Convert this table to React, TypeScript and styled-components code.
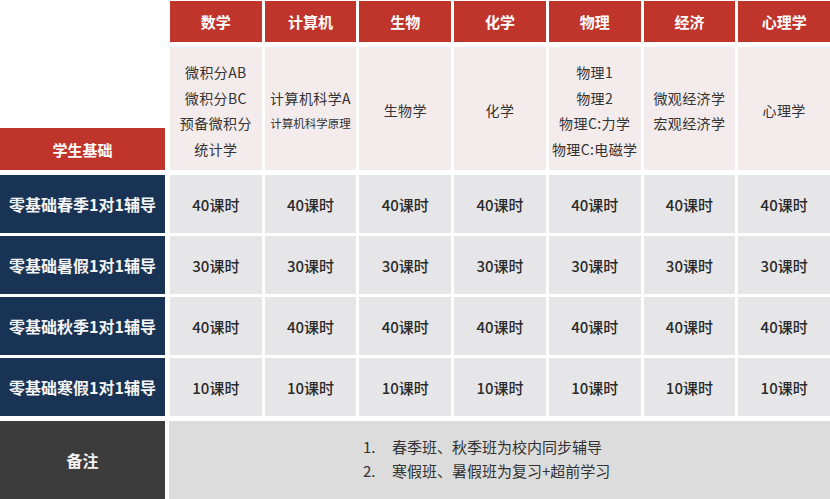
import styled, {createGlobalStyle} from 'styled-components'

const GlobalStyle = createGlobalStyle`
  html, body {
    margin: 0;
    padding: 0;
    background: #ffffff;
  }
  body {
    font-family: "Noto Sans CJK SC", "Noto Sans", sans-serif;
    color: #333333;
  }
`

const colors = {
  red: '#c0352b',
  navy: '#183354',
  charcoal: '#3c3c3c',
  pink: '#f3ebec',
  cell: '#e6e6e8',
  note: '#dcdcdc',
}

const subjects = [
  {name: '数学', courses: ['微积分AB', '微积分BC', '预备微积分', '统计学']},
  {name: '计算机', courses: ['计算机科学A', '计算机科学原理']},
  {name: '生物', courses: ['生物学']},
  {name: '化学', courses: ['化学']},
  {name: '物理', courses: ['物理1', '物理2', '物理C:力学', '物理C:电磁学']},
  {name: '经济', courses: ['微观经济学', '宏观经济学']},
  {name: '心理学', courses: ['心理学']},
]

const plans = [
  {label: '零基础春季1对1辅导', hours: 40},
  {label: '零基础暑假1对1辅导', hours: 30},
  {label: '零基础秋季1对1辅导', hours: 40},
  {label: '零基础寒假1对1辅导', hours: 10},
]

const Table = styled.div`
  width: 830px;
  height: 499px;
  padding-top: 1px;
  box-sizing: border-box;
  display: flex;
  flex-direction: column;
`

const Row = styled.div<{$height: number; $gap?: number}>`
  display: grid;
  grid-template-columns: 167px repeat(7, 1fr);
  column-gap: 3px;
  height: ${p => p.$height}px;
  margin-top: ${p => p.$gap ?? 0}px;
  flex-shrink: 0;
`

const HeadCell = styled.div`
  background: ${colors.red};
  color: #ffffff;
  font-size: 15px;
  font-weight: 700;
  display: flex;
  align-items: center;
  justify-content: center;
`

const Blank = styled.div``

const CornerLabel = styled(HeadCell)`
  margin-right: 2px;
  align-self: end;
  height: 42px;
`

const CourseCell = styled.div`
  background: ${colors.pink};
  display: flex;
  flex-direction: column;
  align-items: center;
  justify-content: center;
  padding-top: 5px;
`

const Course = styled.div<{$small?: boolean}>`
  font-size: ${p => (p.$small ? 11.5 : 14)}px;
  letter-spacing: ${p => (p.$small ? 0 : 0.4)}px;
  line-height: 25.5px;
  color: #333333;
  white-space: nowrap;
`

const PlanLabel = styled.div<{$bg: string}>`
  margin-right: 2px;
  background: ${p => p.$bg};
  color: #f4f4f4;
  font-size: 16px;
  font-weight: 700;
  display: flex;
  align-items: center;
  justify-content: center;
`

const HourCell = styled.div`
  background: ${colors.cell};
  color: #2a2a2a;
  font-size: 15px;
  font-weight: 500;
  display: flex;
  align-items: center;
  justify-content: center;
`

const NoteCell = styled.div`
  grid-column: 2 / -1;
  margin-left: -1px;
  background: ${colors.note};
  display: flex;
  flex-direction: column;
  justify-content: center;
  padding-left: 194px;
  padding-bottom: 2px;
`

const NoteLine = styled.div`
  display: flex;
  font-size: 15px;
  line-height: 24px;
  color: #333333;
`

const NoteNum = styled.span`
  width: 29px;
`

const App = () => {
  return (
    <>
      <GlobalStyle />
      <Table>
        <Row $height={41}>
          <Blank />
          {subjects.map(s => (
            <HeadCell key={s.name}>{s.name}</HeadCell>
          ))}
        </Row>
        <Row $height={123} $gap={5}>
          <CornerLabel>学生基础</CornerLabel>
          {subjects.map(s => (
            <CourseCell key={s.name}>
              {s.courses.map(c => (
                <Course key={c} $small={c === '计算机科学原理'}>
                  {c}
                </Course>
              ))}
            </CourseCell>
          ))}
        </Row>
        {plans.map((p, i) => (
          <Row key={p.label} $height={58} $gap={i === 0 ? 5 : 3}>
            <PlanLabel $bg={colors.navy}>{p.label}</PlanLabel>
            {subjects.map(s => (
              <HourCell key={s.name}>{p.hours}课时</HourCell>
            ))}
          </Row>
        ))}
        <Row $height={78} $gap={5}>
          <PlanLabel $bg={colors.charcoal}>备注</PlanLabel>
          <NoteCell>
            <NoteLine>
              <NoteNum>1.</NoteNum>春季班、秋季班为校内同步辅导
            </NoteLine>
            <NoteLine>
              <NoteNum>2.</NoteNum>寒假班、暑假班为复习+超前学习
            </NoteLine>
          </NoteCell>
        </Row>
      </Table>
    </>
  )
}

export default App
